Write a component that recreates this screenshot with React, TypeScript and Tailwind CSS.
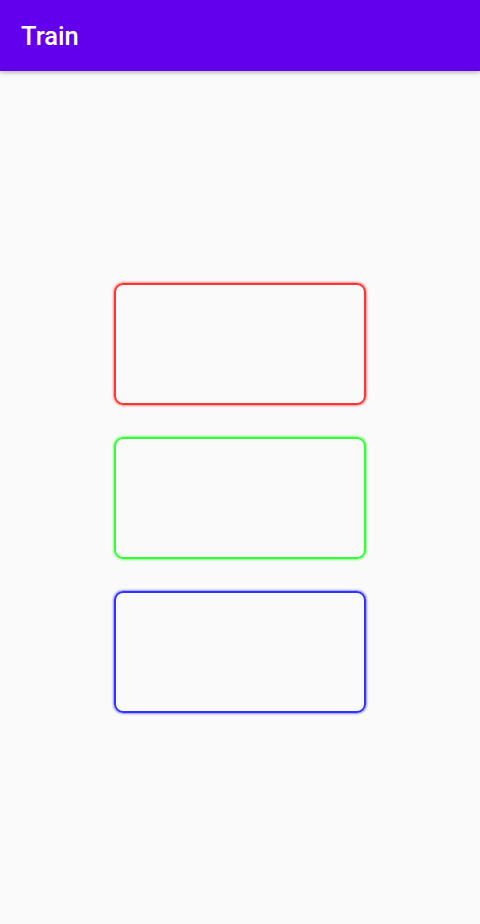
import React from 'react';

const boxes = [
  { id: 'red', cls: 'border-[#ff3333] shadow-[0_0_2px_1px_rgba(255,60,60,0.55)]' },
  { id: 'green', cls: 'border-[#33ff33] shadow-[0_0_2px_1px_rgba(60,255,60,0.55)]' },
  { id: 'blue', cls: 'border-[#3333ff] shadow-[0_0_2px_1px_rgba(60,60,255,0.55)]' },
];

export default function App() {
  return (
    <div className="w-[480px] h-[924px] bg-[#fafafa] flex flex-col font-['Roboto',sans-serif]">
      <header className="h-[71px] shrink-0 bg-[#6200ee] flex items-center px-[21px] pt-[3px] shadow-[0_2px_4px_rgba(0,0,0,0.25)] z-10">
        <h1 className="text-white text-[25.5px] font-medium leading-none">Train</h1>
      </header>
      <main className="flex-1 flex flex-col items-center justify-center gap-[32px]">
        {boxes.map((b) => (
          <div key={b.id} className={`w-[252px] h-[122px] rounded-[9px] border-2 ${b.cls}`} />
        ))}
      </main>
    </div>
  );
}
